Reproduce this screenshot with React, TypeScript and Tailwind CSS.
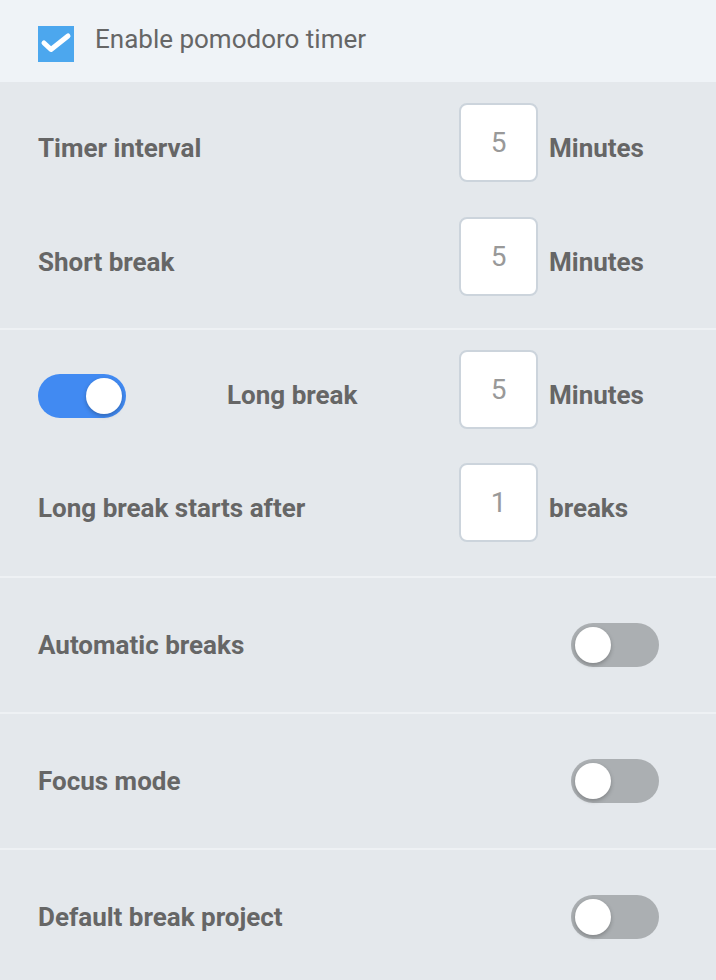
import React from "react";

const font = { fontFamily: "Roboto, 'Noto Sans', sans-serif" };

function Toggle({ on }: { on: boolean }) {
  return (
    <div
      className={`relative w-[88px] h-[44px] rounded-full flex-none ${on ? "bg-[#418af2]" : "bg-[#abafb2]"}`}
    >
      <div
        className={`absolute top-[4px] w-[36px] h-[36px] rounded-full bg-white shadow-[0_2px_4px_rgba(0,0,0,0.25)] ${on ? "left-[48px]" : "left-[4px]"}`}
      />
    </div>
  );
}

function NumBox({ value, unit }: { value: string; unit: string }) {
  return (
    <div className="flex items-center flex-none">
      <div className="w-[79px] h-[79px] rounded-[8px] border-2 border-[#ccd4dc] bg-white flex items-center justify-center text-[28px] text-[#999999]">
        {value}
      </div>
      <div className="w-[129px] ml-[11px] pt-[12px] text-[26px] font-bold text-[#666666]">{unit}</div>
    </div>
  );
}

function Label({ children }: { children: React.ReactNode }) {
  return <div className="flex-1 pt-[12px] text-[26px] font-bold text-[#666666]">{children}</div>;
}

function ToggleRow({ label }: { label: string }) {
  return (
    <div className="h-[136px] border-t-2 border-[#eef1f4] flex items-center pl-[38px] pr-[57px]">
      <div className="flex-1 text-[26px] font-bold text-[#666666]">{label}</div>
      <Toggle on={false} />
    </div>
  );
}

export default function App() {
  return (
    <div className="w-[716px] h-[980px] overflow-hidden bg-[#e4e8ec]" style={font}>
      <div className="h-[82px] bg-[#eff3f7] flex items-start pl-[38px] pt-[26px]">
        <div className="w-[36px] h-[36px] bg-[#4ca7ee] flex-none">
          <svg viewBox="0 0 36 36" width="36" height="36">
            <path d="M6 17 L13 23.5 L30 10" fill="none" stroke="white" strokeWidth="5" strokeLinecap="round" strokeLinejoin="round" />
          </svg>
        </div>
        <div className="ml-[21px] -mt-[5px] text-[26px] text-[#666666] leading-[36px]">Enable pomodoro timer</div>
      </div>

      <div className="h-[246px] pt-[21px] px-[38px] flex flex-col gap-[35px]">
        <div className="flex items-center">
          <Label>Timer interval</Label>
          <NumBox value="5" unit="Minutes" />
        </div>
        <div className="flex items-center">
          <Label>Short break</Label>
          <NumBox value="5" unit="Minutes" />
        </div>
      </div>

      <div className="h-[248px] border-t-2 border-[#eef1f4] pt-[20px] px-[38px] flex flex-col gap-[34px]">
        <div className="flex items-center">
          <div className="flex-1 flex items-center pt-[12px]">
            <Toggle on={true} />
            <div className="ml-[101px] text-[26px] font-bold text-[#666666]">Long break</div>
          </div>
          <NumBox value="5" unit="Minutes" />
        </div>
        <div className="flex items-center">
          <Label>Long break starts after</Label>
          <NumBox value="1" unit="breaks" />
        </div>
      </div>

      <ToggleRow label="Automatic breaks" />
      <ToggleRow label="Focus mode" />
      <ToggleRow label="Default break project" />
    </div>
  );
}
